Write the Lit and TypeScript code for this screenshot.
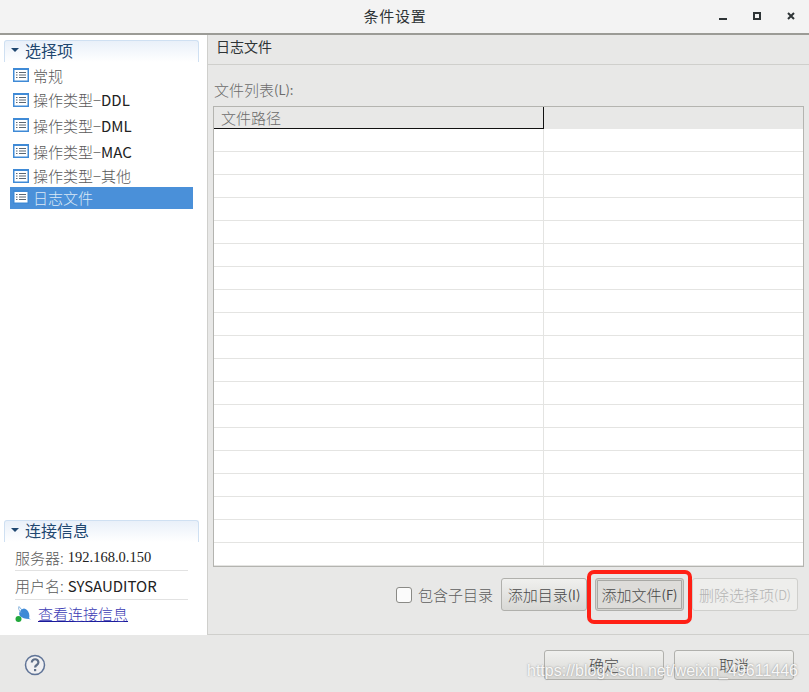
import { LitElement, html, css, svg } from 'lit';
import { customElement } from 'lit/decorators.js';

const NAV = [
  { label: '常规', en: '', h: 24 },
  { label: '操作类型−', en: 'DDL', h: 25 },
  { label: '操作类型−', en: 'DML', h: 26 },
  { label: '操作类型−', en: 'MAC', h: 26 },
  { label: '操作类型−其他', en: '', h: 23 },
  { label: '日志文件', en: '', h: 22, selected: true },
];

const listIcon = svg`<svg class="ico" width="16" height="14" viewBox="0 0 16 14">
  <rect width="16" height="14" fill="#3f8ad6"/>
  <rect x="1.5" y="2" width="13" height="10.5" fill="#fff"/>
  <path d="M3 4.5h1.5M3 7h1.5M3 9.5h1.5M6 4.5h7M6 7h7M6 9.5h7" stroke="#5a6672" fill="none"/>
</svg>`;

@customElement('app-root')
export class AppRoot extends LitElement {
  static styles = css`
    :host {
      display: flex;
      flex-direction: column;
      width: 809px;
      height: 692px;
      position: relative;
      overflow: hidden;
      background: #e8e8e7;
      font-family: 'Noto Sans CJK SC', 'Liberation Sans', sans-serif;
      font-size: 15px;
      font-weight: 300;
      color: #5a5a5a;
    }
    .titlebar {
      flex: none;
      background: #f3f3f3;
      border-bottom: 2px solid #9b9b96;
      display: flex;
      align-items: center;
      justify-content: center;
      position: relative;
      padding: 0 19px 2px 0;
      height: 31px;
      font-size: 15px;
      font-weight: 400;
      color: #2e3436;
      letter-spacing: 0.8px;
    }
    .winbtns {
      position: absolute;
      right: 0;
      top: 0;
      height: 33px;
    }
    .body {
      display: flex;
      height: 600px;
      flex: none;
    }
    .side {
      background: #fff;
      border-right: 1px solid #cfcfcc;
      padding: 5px 8px 0 4px;
      width: 195px;
      display: flex;
      flex-direction: column;
    }
    .sechead {
      border: 1px solid #cfe0f2;
      border-bottom: none;
      border-radius: 3px 3px 0 0;
      background: linear-gradient(#e9f0f9, #fff);
      display: flex;
      align-items: center;
      gap: 6px;
      padding: 0 0 3px 6px;
      height: 18px;
      color: #1f4770;
      font-size: 16px;
      font-weight: 400;
    }
    .tri {
      width: 0;
      height: 0;
      border-left: 4px solid transparent;
      border-right: 4px solid transparent;
      border-top: 4px solid #1f4770;
    }
    .nav {
      margin: 1px 6px 0;
      display: flex;
      flex-direction: column;
    }
    .nav-item {
      display: flex;
      align-items: center;
      gap: 4px;
      padding-left: 3px;
      box-sizing: border-box;
    }
    .nav-item.selected {
      background: #4a90d9;
      color: #dbe8f6;
      padding-bottom: 2px;
    }
    .nav-item .latin { color: #222; font-weight: 400; }
    .spacer { flex: 1; }
    .info {
      margin: 0 11px;
    }
    .info-row {
      height: 29px;
      box-sizing: border-box;
      display: flex;
      align-items: center;
      gap: 4px;
      padding-top: 2px;
      border-bottom: 1px solid #e2e2e2;
    }
    .info-row.user { padding-top: 0; }
    .info-row .val { color: #222; font-weight: 400; }
    .info-row .serif { font-family: 'Liberation Serif', serif; font-size: 14.5px; }
    .link-row {
      height: 35px;
      box-sizing: border-box;
      padding-bottom: 8px;
      display: flex;
      align-items: center;
      gap: 6px;
    }
    .link-row a {
      color: #3a3ab4;
      text-decoration: underline;
      text-decoration-color: #1a1a9a;
    }
    .main {
      flex: 1;
      display: flex;
      flex-direction: column;
    }
    .main-head {
      height: 30px;
      box-sizing: border-box;
      border-bottom: 1px solid #cfcfcc;
      padding: 0 0 8px 8px;
      color: #2e3436;
      font-size: 14px;
      font-weight: 400;
      display: flex;
      align-items: center;
    }
    .main-body {
      flex: 1;
      padding: 13px 5px 0;
      border-bottom: 1px solid #cfcfcc;
      display: flex;
      flex-direction: column;
    }
    .list-label {
      height: 28px;
      box-sizing: border-box;
      padding: 0 0 5px 1px;
      display: flex;
      align-items: center;
      color: #6b6b6b;
    }
    .small { font-size: 13px; font-weight: 400; }
    .table {
      height: 461px;
      box-sizing: border-box;
      border: 1px solid #b4b4b0;
      background: #fff;
      overflow: hidden;
    }
    .thead {
      height: 22px;
      display: flex;
      background: #e8e8e7;
    }
    .th1 {
      width: 330px;
      border-bottom: 1px solid #111;
      border-right: 1px solid #111;
      padding-left: 7px;
      box-sizing: border-box;
      color: #6b6b6b;
      line-height: 21px;
    }
    .row {
      height: 23px;
      box-sizing: border-box;
      border-bottom: 1px solid #e4e4e2;
      display: flex;
    }
    .row .c1 {
      width: 330px;
      border-right: 1px solid #e4e4e2;
      box-sizing: border-box;
    }
    .actions {
      display: flex;
      align-items: center;
      justify-content: flex-end;
      height: 33px;
      margin-top: 11px;
      padding-right: 6px;
      gap: 8px;
    }
    .check {
      display: flex;
      align-items: center;
      gap: 6px;
      color: #5e5e5e;
    }
    .box {
      width: 14px;
      height: 14px;
      border: 1px solid #8a8a86;
      border-radius: 3px;
      background: #fbfbfb;
    }
    .btn {
      height: 33px;
      box-sizing: border-box;
      border: 1px solid #b0b0ac;
      border-radius: 3px;
      background: linear-gradient(#f0f0ee, #d8d8d5);
      color: #4a4a4a;
      display: flex;
      align-items: center;
      justify-content: center;
      white-space: nowrap;
    }
    .btn.focused {
      box-shadow: inset 0 0 0 1px #d4d4d0, inset 0 0 0 2px #a8a8a4;
      background: #dddcd9;
    }
    .btn.disabled {
      background: #eeeeec;
      border-color: #cfcfcc;
      color: #b4b4b4;
    }
    .btn.disabled .small { font-weight: 300; }
    .footer {
      flex: 1;
      display: flex;
      align-items: center;
      justify-content: flex-end;
      gap: 10px;
      padding: 2px 15px 0 24px;
    }
    .footer .btn { width: 120px; height: 30px; }
    .help { margin-right: auto; }
    .redbox {
      position: absolute;
      left: 587px;
      top: 570px;
      width: 105px;
      height: 54px;
      box-sizing: border-box;
      border: 4px solid #ff2015;
      border-radius: 7px;
    }
    .mark {
      position: absolute;
      left: 527px;
      top: 662px;
      font-family: 'Liberation Sans', sans-serif;
      font-size: 16px;
      font-weight: 400;
      color: rgba(255, 255, 255, 0.92);
      text-shadow: 0 0 2px rgba(110, 110, 110, 0.7);
      white-space: nowrap;
    }
  `;

  render() {
    const rows = Array.from({ length: 19 });
    return html`
      <div class="titlebar">
        条件设置
        <svg class="winbtns" width="169" height="33" viewBox="640 0 169 33">
          <rect x="719" y="18" width="8" height="2" fill="#2e3436"/>
          <rect x="754" y="13" width="6" height="6" fill="none" stroke="#2e3436" stroke-width="2"/>
          <path d="M788 13l6 6M794 13l-6 6" stroke="#2e3436" stroke-width="2" fill="none"/>
        </svg>
      </div>
      <div class="body">
        <div class="side">
          <div class="sechead"><span class="tri"></span>选择项</div>
          <div class="nav">
            ${NAV.map(
              (n) => html`<div class="nav-item ${n.selected ? 'selected' : ''}" style="height:${n.h}px">
                ${listIcon}<span>${n.label}<span class="latin">${n.en}</span></span>
              </div>`
            )}
          </div>
          <div class="spacer"></div>
          <div class="sechead"><span class="tri"></span>连接信息</div>
          <div class="info">
            <div class="info-row">服务器: <span class="val serif">192.168.0.150</span></div>
            <div class="info-row user">用户名: <span class="val">SYSAUDITOR</span></div>
            <div class="link-row">
              <svg width="17" height="18" viewBox="0 0 17 18">
                <path d="M4 1.5l11 13" stroke="#7fb4e6" stroke-width="1" fill="none"/>
                <path d="M6 5c2-2 4-2 6 0 2 2 3 5 2 9-4 0-7-1-9-3-1.500-2-1-4 1-6z" fill="#3f8ad6"/>
                <path d="M4 1.500c-1 2 0 4 2 6" stroke="#8fb8dd" fill="none"/>
                <circle cx="3.500" cy="14" r="3" fill="#22a83c"/>
              </svg>
              <a>查看连接信息</a>
            </div>
          </div>
        </div>
        <div class="main">
          <div class="main-head">日志文件</div>
          <div class="main-body">
            <div class="list-label">文件列表<span class="small">(L):</span></div>
            <div class="table">
              <div class="thead"><div class="th1">文件路径</div></div>
              ${rows.map(() => html`<div class="row"><div class="c1"></div></div>`)}
            </div>
            <div class="actions">
              <div class="check"><span class="box"></span>包含子目录</div>
              <div class="btn" style="width:86px">添加目录<span class="small">(I)</span></div>
              <div class="btn focused" style="width:89px">添加文件<span class="small">(F)</span></div>
              <div class="btn disabled" style="width:106px">删除选择项<span class="small">(D)</span></div>
            </div>
          </div>
        </div>
      </div>
      <div class="footer">
        <svg class="help" width="22" height="22" viewBox="0 0 22 22">
          <circle cx="11" cy="11" r="9.500" fill="#f0f0f2" stroke="#5f7396" stroke-width="1.500"/>
          <path d="M7.800 8.500c0-4.400 6.800-4.200 6.600 0 0 2.600-3.300 2.400-3.300 5" stroke="#5f6f88" stroke-width="2.200" fill="none"/>
          <rect x="10" y="15" width="2.200" height="2.200" fill="#5f6f88"/>
        </svg>
        <div class="btn">确定</div>
        <div class="btn">取消</div>
      </div>
      <div class="redbox"></div>
      <div class="mark">https://blog.csdn.net/weixin_49611446</div>
    `;
  }
}
